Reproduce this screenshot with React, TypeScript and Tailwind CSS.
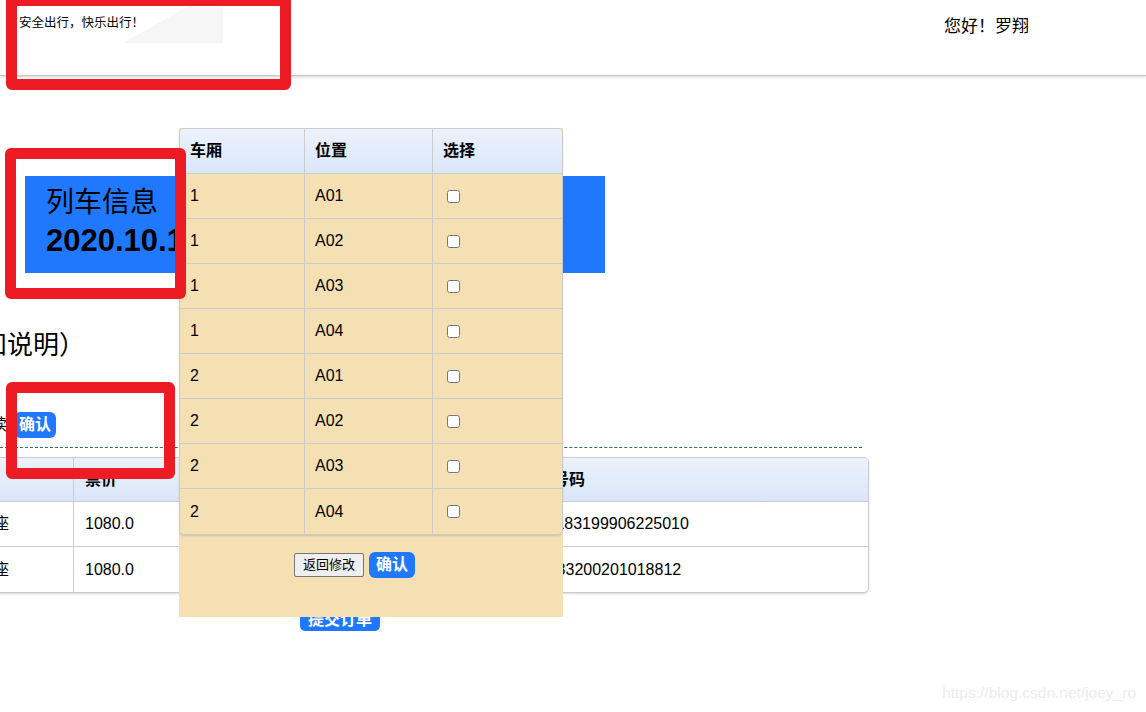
import { Fragment } from 'react';

const seats = [
  { car: '1', pos: 'A01' },
  { car: '1', pos: 'A02' },
  { car: '1', pos: 'A03' },
  { car: '1', pos: 'A04' },
  { car: '2', pos: 'A01' },
  { car: '2', pos: 'A02' },
  { car: '2', pos: 'A03' },
  { car: '2', pos: 'A04' },
];

const passengers = [
  { type: '二等座', price: '1080.0', name: '罗翔', card: '身份证', id: '3101183199906225010' },
  { type: '二等座', price: '1080.0', name: '张三', card: '身份证', id: '310183200201018812' },
];

function RedBox({ className }: { className: string }) {
  return <div className={`pointer-events-none absolute rounded-[6px] border-[11px] border-[#ed1c24] ${className}`} />;
}

export default function App() {
  return (
    <div className="relative h-[712px] w-[1146px] overflow-hidden bg-white font-['Liberation_Sans','Noto_Sans_CJK_SC',sans-serif] text-black">
      {/* top bar */}
      <header className="flex h-[76px] justify-between border-b border-[#c4c4c4] shadow-[0_1px_3px_rgba(0,0,0,0.18)]">
        <div className="relative w-[230px]">
          <svg className="absolute left-[123px] top-[7px]" width="100" height="36" viewBox="0 0 100 36">
            <polygon points="64,0 100,0 100,36 0,36" fill="#f6f6f6" />
          </svg>
          <p className="relative pl-[19px] pt-[15px] text-[12.5px] leading-[17px]">安全出行，快乐出行！</p>
        </div>
        <p className="pr-[117px] pt-[17px] text-[17px] leading-[20px]">您好！罗翔</p>
      </header>

      <main>
        <section className="ml-[25px] mt-[100px] h-[97px] w-[580px] bg-[#1f78fe] pl-[21px] pt-[9px]">
          <p className="text-[28px] leading-[36px]">列车信息</p>
          <p className="mt-[2px] text-[31px] font-bold leading-[36px]">2020.10.12 G101</p>
        </section>

        <h2 className="ml-[-45px] mt-[54px] text-[26px] leading-[36px]">须知说明）</h2>

        <div className="ml-[-9px] mt-[49px] flex h-[26px] items-center gap-[7px]">
          <span className="text-[16px]">读</span>
          <button className="h-[26px] rounded-[6px] bg-[#1f78fe] px-[5px] text-[16px] font-bold text-white">确认</button>
        </div>

        <div className="mt-[9px] w-[862px] border-t border-dashed border-[#2f6f6f]" />

        <div className="ml-[-51px] mt-[9px] w-[920px] overflow-hidden rounded-[5px] border border-[#cccccc] shadow-[0_1px_2px_rgba(0,0,0,0.15)]">
          <div className="grid grid-cols-[124px_167px_140px_129px_1fr] text-[16px]">
            {['席别', '票价', '乘车人', '证件类型', '证件号码'].map((h, i) => (
              <div
                key={h}
                className={`flex h-[44px] items-center border-b border-[#cccccc] bg-linear-to-b from-[#ebf2fc] to-[#dae6f8] px-[11px] font-bold ${i < 4 ? 'border-r' : ''}`}
              >
                {h}
              </div>
            ))}
            {passengers.map((p, r) => (
              <Fragment key={p.id}>
                {[p.type, p.price, p.name, p.card, p.id].map((v, i) => (
                  <div
                    key={i}
                    className={`flex h-[45px] items-center border-[#cccccc] px-[11px] ${i < 4 ? 'border-r' : ''} ${r === 0 ? 'border-b' : ''}`}
                  >
                    {v}
                  </div>
                ))}
              </Fragment>
            ))}
          </div>
        </div>

        <button className="ml-[300px] mt-[16px] h-[22px] rounded-[5px] bg-[#1f78fe] px-[8px] text-[16px] font-bold leading-[22px] text-white">
          提交订单
        </button>
      </main>

      {/* seat picker popup */}
      <div className="absolute left-[179px] top-[128px] h-[489px] w-[384px] bg-[#f5e0b3]">
        <div className="overflow-hidden rounded-[5px] border border-[#cccccc] shadow-[0_1px_2px_rgba(0,0,0,0.15)]">
          <div className="grid grid-cols-[125px_128px_1fr] text-[16px]">
            {['车厢', '位置', '选择'].map((h, i) => (
              <div
                key={h}
                className={`flex h-[45px] items-center border-b border-[#cccccc] bg-linear-to-b from-[#ebf2fc] to-[#dae6f8] px-[10px] font-bold ${i < 2 ? 'border-r' : ''}`}
              >
                {h}
              </div>
            ))}
            {seats.map((s, r) => (
              <Fragment key={s.car + s.pos}>
                <div className={`flex h-[45px] items-center border-r border-[#cccccc] px-[10px] ${r < 7 ? 'border-b' : ''}`}>{s.car}</div>
                <div className={`flex h-[45px] items-center border-r border-[#cccccc] px-[10px] ${r < 7 ? 'border-b' : ''}`}>{s.pos}</div>
                <div className={`flex h-[45px] items-center border-[#cccccc] pl-[14px] ${r < 7 ? 'border-b' : ''}`}>
                  <input type="checkbox" className="m-0 h-[13px] w-[13px]" />
                </div>
              </Fragment>
            ))}
          </div>
        </div>
        <div className="mt-[17px] flex items-center gap-[5px] pl-[115px]">
          <button className="h-[24px] rounded-[2px] border border-[#767676] bg-[#efefef] px-[8px] text-[13px] leading-[20px]">返回修改</button>
          <button className="h-[26px] rounded-[6px] bg-[#1f78fe] px-[7px] text-[16px] font-bold text-white">确认</button>
        </div>
      </div>

      {/* annotation boxes */}
      <RedBox className="left-[6px] top-[-5px] h-[95px] w-[285px]" />
      <RedBox className="left-[5px] top-[148px] h-[151px] w-[181px]" />
      <RedBox className="left-[6px] top-[382px] h-[97px] w-[169px]" />

      <p className="absolute bottom-[8px] right-[10px] text-[15.5px] text-[#ececec]">https://blog.csdn.net/joey_ro</p>
    </div>
  );
}
